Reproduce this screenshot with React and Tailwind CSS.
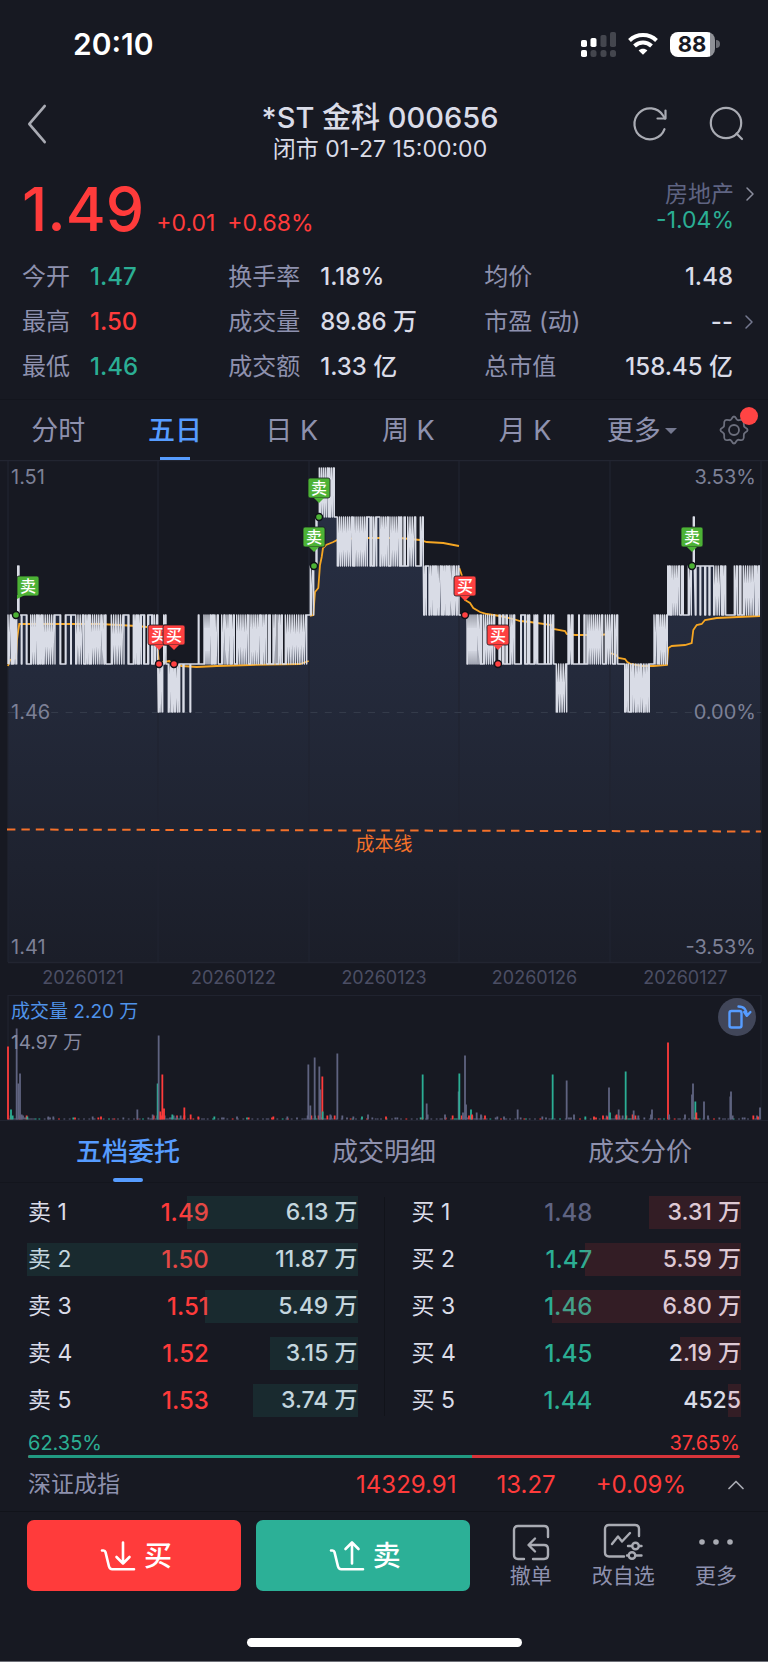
import React, { useState } from "react";
import { ChevronLeft, ChevronRight, ChevronUp } from "lucide-react";
import clsx from "clsx";

const STATS = [
  [["今开", "1.47", "text-[#2bae94]"], ["换手率", "1.18%"], ["均价", "1.48"]],
  [["最高", "1.50", "text-[#ff3b3b]"], ["成交量", "89.86 万"], ["市盈 (动)", "--", "", true]],
  [["最低", "1.46", "text-[#2bae94]"], ["成交额", "1.33 亿"], ["总市值", "158.45 亿"]],
];

const PERIODS = ["分时", "五日", "日 K", "周 K", "月 K", "更多"];
const BOOK_TABS = ["五档委托", "成交明细", "成交分价"];

const ASKS = [
  ["卖 1", "1.49", "6.13 万", 6.13, "text-[#ff3b3b]"],
  ["卖 2", "1.50", "11.87 万", 11.87, "text-[#ff3b3b]"],
  ["卖 3", "1.51", "5.49 万", 5.49, "text-[#ff3b3b]"],
  ["卖 4", "1.52", "3.15 万", 3.15, "text-[#ff3b3b]"],
  ["卖 5", "1.53", "3.74 万", 3.74, "text-[#ff3b3b]"],
];

const BIDS = [
  ["买 1", "1.48", "3.31 万", 3.31, "text-[#5f6482]"],
  ["买 2", "1.47", "5.59 万", 5.59, "text-[#2bae94]"],
  ["买 3", "1.46", "6.80 万", 6.8, "text-[#2bae94]"],
  ["买 4", "1.45", "2.19 万", 2.19, "text-[#2bae94]"],
  ["买 5", "1.44", "4525", 0.4525, "text-[#2bae94]"],
];

const MAX_QTY = 11.87;

// y of each price level on the chart
const LEVEL = { 151: 468, 150: 517, 149: 566, 148: 615, 147: 664, 146: 712 };

// Ticks of the five day line, three ticks to one chart unit.
// [high, low, [[from, to, rest level after the run], ...]]
const SEGMENTS = [
  [148, 147, [[24, 34, "l"], [38, 50, "h"]]],
  [149, 148, [[53, 57, "l"]]],
  [148, 147, [[64, 66, "h"], [79, 81, "l"], [92, 112, "l"], [115, 126, "l"], [129, 165, "h"], [180, 182, "l"], [196, 198, "h"], [212, 214, "h"], [227, 251, "l"], [256, 268, "l"], [271, 306, "h"], [312, 318, "l"], [334, 372, "h"], [384, 387, "l"], [400, 412, "l"], [416, 424, "h"], [431, 434, "l"], [443, 446, "h"], [455, 458, "l"], [463, 473, "l"]]],
  [147, 146, [[475, 488, "h"]]],
  [148, 147, [[491, 498, "l"]]],
  [147, 146, [[505, 513, "h"], [517, 519, "h"], [524, 526, "h"], [532, 539, "h"], [549, 552, "h"], [570, 572, "h"]]],
  [148, 147, [[595, 597, "l"], [612, 633, "l"], [637, 642, "l"], [645, 655, "l"], [665, 675, "h"], [681, 690, "l"], [694, 703, "l"], [710, 745, "l"], [750, 782, "h"], [786, 800, "l"], [806, 811, "l"], [819, 828, "l"], [834, 847, "l"], [856, 920, "h"]]],
  [149, 148, [[931, 941, "h"]]],
  [150, 149, [[948, 951, "h"]]],
  [151, 150, [[958, 985, "h"], [989, 1003, "l"]]],
  [150, 149, [[1012, 1058, "l"], [1062, 1102, "h"], [1110, 1116, "l"], [1121, 1130, "h"], [1140, 1165, "l"], [1170, 1198, "l"], [1202, 1205, "l"], [1212, 1216, "l"], [1223, 1247, "l"], [1261, 1270, "l"]]],
  [149, 148, [[1271, 1279, "h"], [1287, 1300, "h"], [1304, 1309, "h"], [1314, 1324, "h"], [1328, 1340, "h"], [1344, 1350, "h"], [1356, 1363, "h"], [1369, 1377, "l"]]],
  [148, 147, [[1401, 1434, "h"], [1440, 1444, "l"], [1450, 1484, "l"], [1497, 1501, "l"], [1507, 1512, "l"], [1518, 1522, "l"], [1530, 1544, "l"], [1562, 1564, "h"], [1574, 1577, "l"], [1583, 1589, "l"], [1602, 1613, "l"], [1633, 1636, "l"], [1643, 1646, "l"], [1652, 1661, "l"]]],
  [147, 146, [[1669, 1700, "h"]]],
  [148, 147, [[1704, 1708, "h"], [1714, 1719, "l"], [1736, 1738, "l"], [1752, 1755, "l"], [1761, 1808, "l"], [1816, 1838, "l"], [1844, 1853, "l"]]],
  [147, 146, [[1874, 1886, "l"], [1892, 1900, "h"], [1906, 1924, "h"], [1930, 1948, "h"]]],
  [148, 147, [[1962, 1972, "h"], [1976, 2002, "h"]]],
  [149, 148, [[2003, 2009, "l"], [2013, 2039, "l"], [2045, 2050, "l"], [2065, 2074, "h"]]],
  [150, 149, [[2080, 2083, "l"]]],
  [149, 148, [[2086, 2088, "h"], [2100, 2102, "h"], [2114, 2117, "h"], [2127, 2130, "h"], [2141, 2165, "l"], [2169, 2177, "l"], [2203, 2212, "l"], [2218, 2223, "l"], [2230, 2266, "l"], [2270, 2278, "h"]]],
];

const AVERAGE = [
  [[24, 666], [30, 660], [48, 658], [51, 640], [55, 630], [58, 624], [300, 624], [410, 626], [440, 627], [472, 629]],
  [[473, 650], [477, 663], [492, 662], [508, 661], [518, 664], [545, 666], [590, 667], [650, 666], [750, 665], [900, 664], [926, 661]],
  [[930, 616], [940, 615], [945, 592], [955, 588], [960, 565], [965, 557], [969, 548], [978, 545], [1000, 542], [1012, 540], [1070, 538], [1200, 538], [1260, 540], [1280, 542], [1330, 543], [1377, 546]],
  [[1378, 568], [1385, 575], [1395, 600], [1410, 603], [1420, 608], [1440, 612], [1460, 614], [1500, 616], [1540, 619], [1560, 621], [1590, 622], [1655, 625], [1660, 629], [1695, 631], [1700, 634], [1725, 635], [1800, 635], [1828, 634]],
  [[1830, 653], [1848, 655], [1855, 658], [1875, 659], [1882, 662], [1892, 664], [1925, 666], [1960, 666], [2001, 665], [2005, 648], [2015, 646], [2055, 645], [2075, 643], [2080, 630], [2090, 625], [2105, 624], [2115, 620], [2150, 618], [2280, 616]],
];

const MARKS = [
  { x: 16, y: 615, type: "sell", shift: 12 },
  { x: 159, y: 664, type: "buy" },
  { x: 174, y: 664, type: "buy" },
  { x: 319, y: 517, type: "sell" },
  { x: 314, y: 566, type: "sell" },
  { x: 465, y: 615, type: "buy" },
  { x: 498, y: 664, type: "buy" },
  { x: 692, y: 566, type: "sell" },
];

const DATES = ["20260121", "20260122", "20260123", "20260126", "20260127"];
const DAY_EDGES = [8, 158, 309, 459, 610, 761];

const VOLUMES = [
  [24, 73, "r"], [33, 10, "g"], [38, 4, "g"], [50, 91, "n"], [55, 36, "n"], [60, 46, "n"], [65, 5, "n"], [82, 3, "g"], [145, 3, "n"],
  [160, 3, "n"], [278, 3, "n"], [303, 3, "r"], [412, 10, "n"], [458, 5, "n"], [473, 36, "g"], [476, 84, "n"], [481, 8, "r"], [487, 45, "r"],
  [492, 11, "r"], [517, 5, "g"], [530, 3, "n"], [553, 12, "r"], [572, 5, "r"], [595, 3, "r"], [643, 3, "g"], [711, 3, "n"], [820, 3, "r"],
  [862, 3, "n"], [925, 55, "n"], [931, 14, "n"], [944, 62, "n"], [958, 53, "n"], [961, 30, "n"], [967, 43, "r"], [968, 8, "g"], [991, 5, "n"],
  [1012, 66, "n"], [1027, 4, "n"], [1060, 3, "n"], [1086, 3, "g"], [1104, 5, "n"], [1158, 3, "r"], [1268, 45, "g"], [1280, 16, "n"],
  [1283, 5, "n"], [1335, 5, "n"], [1376, 28, "n"], [1378, 46, "g"], [1389, 7, "n"], [1395, 64, "n"], [1398, 15, "n"], [1413, 10, "g"],
  [1416, 5, "r"], [1430, 7, "n"], [1443, 5, "n"], [1492, 3, "n"], [1512, 3, "n"], [1553, 10, "n"], [1627, 3, "n"], [1658, 45, "g"],
  [1700, 39, "n"], [1722, 5, "n"], [1756, 3, "g"], [1782, 3, "r"], [1822, 3, "r"], [1827, 32, "n"], [1830, 7, "g"], [1850, 5, "r"],
  [1856, 10, "n"], [1877, 48, "g"], [1898, 5, "r"], [1901, 9, "n"], [1915, 4, "n"], [1953, 5, "n"], [1956, 10, "n"], [2004, 77, "r"],
  [2007, 5, "n"], [2055, 5, "n"], [2076, 25, "n"], [2079, 36, "n"], [2086, 18, "g"], [2089, 7, "r"], [2112, 18, "n"], [2124, 4, "n"],
  [2191, 23, "n"], [2193, 28, "n"], [2198, 4, "n"], [2274, 3, "r"], [2280, 12, "n"],
];

const VOLUME_COLOR = { r: "#ff3b3b", g: "#2bae94", n: "#5f6380" };

// low turnover minutes between the peaks
const QUIET = Array.from({ length: 420 }, (_, i) => {
  const seed = (i * 7919 + 131) % 97;
  const t = 27 + Math.floor(i * 5.37);
  const nearOpen = DAY_EDGES.some((e) => t / 3 - e > -8 && t / 3 - e < 28);
  if (!nearOpen && seed > 42) return null;
  return [t, nearOpen && seed % 3 === 0 ? 4 : seed % 5 === 0 ? 2 : 1, seed % 6 === 0 ? "r" : seed % 7 === 0 ? "g" : "n"];
}).filter(Boolean);

function pricePoints() {
  const points = [];
  SEGMENTS.forEach(([high, low, runs]) => {
    const h = LEVEL[high];
    const l = LEVEL[low];
    runs.forEach(([from, to, rest]) => {
      points.push([from / 3, l], [from / 3, h]);
      // odd number of steps, so the zigzag that starts high ends low
      const half = Math.round((to - from) / 7);
      const steps = half * 2 + 1;
      for (let i = 1; i < steps; i++) {
        points.push([(from + ((to - from) * i) / steps) / 3, i % 2 ? l : h]);
      }
      points.push([to / 3, h], [to / 3, l], [to / 3, rest === "h" ? h : l]);
    });
  });
  // a flat stretch keeps the level of the run before it
  const out = [];
  points.forEach((p) => {
    const prev = out[out.length - 1];
    if (prev && p[0] - prev[0] > 2.2) out.push([p[0], prev[1]]);
    out.push(p);
  });
  out.push([760, out[out.length - 1][1]]);
  return out;
}

const toPath = (pts) => pts.map(([x, y], i) => `${i ? "L" : "M"}${x.toFixed(1)} ${y}`).join("");

const PRICE_PATH = toPath(pricePoints());

function Mark({ x, y, type, shift = 0 }) {
  const color = type === "sell" ? "#4cb235" : "#ff4141";
  const cx = x + shift;
  const tip = shift ? `M${cx - 11} ${y - 20}v4l8 -4z` : `M${cx - 5} ${y - 19}l5 5l5 -5z`;
  return (
    <g>
      <rect x={cx - 11} y={y - 39} width="22" height="20" rx="2" fill={color} stroke="#171922" strokeWidth="0.8" />
      <path d={tip} fill={color} />
      <text x={cx} y={y - 23} textAnchor="middle" fontSize="16" fontWeight="500" fill="#fff">
        {type === "sell" ? "卖" : "买"}
      </text>
      <circle cx={x} cy={y} r="3.5" fill={color} stroke="#0f1118" strokeWidth="1.4" />
    </g>
  );
}

function PriceChart() {
  return (
    <svg viewBox="0 460 768 535" className="block w-full h-auto">
      <defs>
        <linearGradient id="area" gradientUnits="userSpaceOnUse" x1="0" y1="520" x2="0" y2="962">
          <stop offset="0" stopColor="#272e42" />
          <stop offset="0.35" stopColor="#242a3b" />
          <stop offset="1" stopColor="#1b1e29" />
        </linearGradient>
      </defs>
      <path d={`${PRICE_PATH}L760 962L8 962Z`} fill="url(#area)" />
      <path d="M0 460.5H768M8 962.5H761" stroke="#222531" strokeWidth="1.4" />
      {DAY_EDGES.map((x) => (
        <path key={x} d={`M${x} 461V962`} stroke="#212431" strokeWidth="1.2" />
      ))}
      <path d="M8 712.5H761" stroke="#343b4a" strokeDasharray="7 7.4" />
      {AVERAGE.map((day, i) => (
        <path key={i} d={toPath(day.map(([t, y]) => [t / 3, y]))} fill="none" stroke="#f5a623" strokeWidth="1.8" />
      ))}
      <path d={PRICE_PATH} fill="none" stroke="#d9dce6" strokeWidth="1.4" strokeLinejoin="round" />
      <path d="M7 829.5L761 831.5" stroke="#f4712a" strokeWidth="2" strokeDasharray="8.4 6" />
      <text x="384" y="851" textAnchor="middle" fontSize="19" fill="#f4712a">成本线</text>
      {MARKS.map((m, i) => (
        <Mark key={i} {...m} />
      ))}
      <g fontSize="20" fill="#7c8096">
        <text x="11" y="484">1.51</text>
        <text x="11" y="719">1.46</text>
        <text x="11" y="954">1.41</text>
        <g textAnchor="end">
          <text x="756" y="484">3.53%</text>
          <text x="756" y="719">0.00%</text>
          <text x="756" y="954">-3.53%</text>
        </g>
      </g>
      <g fontSize="18" fill="#4b4e64" textAnchor="middle">
        {DATES.map((d, i) => (
          <text key={d} x={(DAY_EDGES[i] + DAY_EDGES[i + 1]) / 2} y="984">{d}</text>
        ))}
      </g>
    </svg>
  );
}

function VolumeChart() {
  return (
    <div className="relative">
      <svg viewBox="0 995 768 126" className="block w-full h-auto">
        <path d="M8 1120V995.5H761V1120" fill="none" stroke="#20232f" strokeWidth="1.2" />
        <path d="M0 1120.5H768" stroke="#20232f" />
        {[...QUIET, ...VOLUMES].map(([t, h, c], i) => (
          <rect key={i} x={t / 3 - 0.9} y={1119.5 - h} width="1.8" height={h} fill={VOLUME_COLOR[c]} />
        ))}
        <text x="11" y="1018" fontSize="19" fill="#4f93ea">成交量 2.20 万</text>
        <text x="11" y="1049" fontSize="19" fill="#868aa0">14.97 万</text>
      </svg>
      <button aria-label="横屏" className="absolute right-3 top-[3px] w-[38px] h-[38px] rounded-full bg-[#414659] flex items-center justify-center">
        <svg viewBox="0 0 38 38" className="w-full h-full" fill="none" stroke="#569cff" strokeWidth="2.4" strokeLinecap="round" strokeLinejoin="round">
          <rect x="11.5" y="13" width="12" height="16.5" rx="2" />
          <path d="M20.5 8.5C26 8.5 29 12 28.8 17.5M26.2 14l2.6 3.8l3.6-3.8" />
        </svg>
      </button>
    </div>
  );
}

function OrderTable({ rows, barClass, label }) {
  return (
    <table aria-label={label} className="flex-1 table-fixed border-collapse text-[23px] font-medium text-[#dadce8]">
      <tbody>
        {rows.map(([name, price, qty, size, color]) => (
          <tr key={name} className="relative h-[47px]">
            <td className="w-[22%] pl-px font-normal">{name}</td>
            <td className={clsx("w-[33%] text-right text-2xl", color)}>{price}</td>
            <td className="text-right">
              {qty}
              <span
                className={clsx("absolute right-0 inset-y-[7px]", barClass)}
                style={{ width: `${(size / MAX_QTY) * 100}%` }}
              />
            </td>
          </tr>
        ))}
      </tbody>
    </table>
  );
}

function TradeIcon({ up }) {
  return (
    <svg viewBox="0 0 36 32" className="w-9 h-8" fill="none" stroke="#fff" strokeWidth="2.6" strokeLinecap="round" strokeLinejoin="round">
      <path d="M2 10.5h1.5q1.6 0 2 1.6L9 26.5q.7 2.7 3.2 2.7H34" />
      {up ? <path d="M23 23.5V2.5M16.5 9L23 2.5L29.5 9" /> : <path d="M23 2.5V23.5M16.5 17L23 23.5L29.5 17" />}
    </svg>
  );
}

function ToolButton({ label, children }) {
  return (
    <button className="flex flex-col items-center text-[21px] leading-7 text-[#8e91ae]">
      <svg viewBox="0 0 40 40" className="w-10 h-10" fill="none" stroke="#a9abb3" strokeWidth="2.4" strokeLinecap="round" strokeLinejoin="round">
        {children}
      </svg>
      {label}
    </button>
  );
}

function StatusBar() {
  return (
    <div className="h-[88px] flex items-center justify-between pl-[73px] pr-12 text-white">
      <span className="text-[30px] font-semibold">20:10</span>
      <div className="flex items-center gap-3">
        <svg viewBox="0 0 35 25" className="w-[35px] h-[25px]" fill="#fff">
          <rect x="0" y="8" width="6" height="7" rx="1.8" />
          <rect x="9.5" y="6" width="6" height="9" rx="1.8" />
          <rect x="19.5" y="3" width="6" height="12" rx="1.8" fill="#44464e" />
          <rect x="29" y="0" width="6" height="15" rx="1.8" fill="#44464e" />
          <rect x="0" y="18" width="6" height="7" rx="1.8" />
          <rect x="9.5" y="18" width="6" height="7" rx="2.5" fill="#44464e" />
          <rect x="19.5" y="18" width="6" height="7" rx="2.5" fill="#44464e" />
          <rect x="29" y="18" width="6" height="7" rx="2.5" fill="#44464e" />
        </svg>
        <svg viewBox="0 0 30 22" className="w-[30px] h-[22px]" fill="none" stroke="#fff" strokeWidth="4">
          <path d="M1.5 7.5C9 .3 21 .3 28.5 7.5" />
          <path d="M6.5 13C11.5 8.3 18.5 8.3 23.5 13" />
          <path d="M15 21.8L10.6 17.4C13 15.2 17 15.2 19.4 17.4Z" fill="#fff" stroke="none" />
        </svg>
        <div className="flex items-center gap-px">
          <span className="w-[45px] h-[25px] rounded-lg bg-linear-to-r from-white from-88% to-[#8f9197] to-88% text-[#171922] text-[22px] leading-[25px] font-bold text-center pr-px">
            88
          </span>
          <span className="w-1 h-2 rounded-r-full bg-[#6b6d74]" />
        </div>
      </div>
    </div>
  );
}

export default function App() {
  const [period, setPeriod] = useState("五日");
  const [bookTab, setBookTab] = useState("五档委托");

  return (
    <div className="w-full bg-[#171922] border-b border-[#6c6e76] font-['Inter','Noto_Sans_CJK_SC',sans-serif] text-[#dadce8]">
      <StatusBar />

      {/* Header */}
      <header className="relative h-[84px] pl-[19px] pr-[22px] pt-3 flex justify-between items-start">
        <button aria-label="返回" className="h-12 flex items-center">
          <ChevronLeft className="w-9 h-12" stroke="#a9abb3" strokeWidth={1} preserveAspectRatio="none" viewBox="5 4 14 16" />
        </button>
        <div className="absolute inset-x-0 top-[14px] pr-2 text-center pointer-events-none">
          <h1 className="text-[29px] leading-8 font-medium">*ST 金科 000656</h1>
          <p className="text-[23px] leading-[30px]">闭市 01-27 15:00:00</p>
        </div>
        <div className="flex gap-9 h-12 items-center">
          <button aria-label="刷新">
            <svg viewBox="0 0 40 40" className="w-10 h-10" fill="none" stroke="#a9abb3" strokeWidth="2.2" strokeLinecap="round" strokeLinejoin="round">
              <path d="M34.5 25.2A15.5 15.5 0 1 1 33 11.5L35 14.5" />
              <path d="M35.5 6.5V14.5H27.5" />
            </svg>
          </button>
          <button aria-label="搜索">
            <svg viewBox="0 0 40 40" className="w-10 h-10" fill="none" stroke="#a9abb3" strokeWidth="2.2" strokeLinecap="round">
              <circle cx="20" cy="19" r="15.2" />
              <path d="M30.5 29.5L36 35" />
            </svg>
          </button>
        </div>
      </header>

      {/* Last price */}
      <section className="h-[82px] pl-[22px] pr-1.5 flex justify-between">
        <div className="flex items-baseline text-[#ff3b3b]">
          <span className="text-[61px] leading-[74px] font-medium">1.49</span>
          <span className="ml-3 text-[23px]">+0.01</span>
          <span className="ml-3 text-[23px]">+0.68%</span>
        </div>
        <div className="flex pt-2">
          <div className="text-right text-[23px] leading-7">
            <p className="text-[#5f6482]">房地产</p>
            <p className="leading-6 text-[#2bae94]">-1.04%</p>
          </div>
          <ChevronRight className="ml-1 w-6 h-7" stroke="#8b8e9e" strokeWidth={1.5} />
        </div>
      </section>

      {/* Quote figures */}
      <section className="pl-[22px] pr-[7px] pb-2.5">
        {STATS.map(([a, b, c]) => (
          <div key={a[0]} className="h-[45px] grid grid-cols-[29fr_36fr_35fr_28px] items-center text-2xl">
            <div className="flex gap-5">
              <span className="text-[#8e91ae]">{a[0]}</span>
              <span className={clsx("font-medium", a[2])}>{a[1]}</span>
            </div>
            <div className="flex gap-5">
              <span className="text-[#8e91ae]">{b[0]}</span>
              <span className="font-medium">{b[1]}</span>
            </div>
            <div className="flex justify-between">
              <span className="text-[#8e91ae]">{c[0]}</span>
              <span className="font-medium">{c[1]}</span>
            </div>
            {c[3] && <ChevronRight className="ml-1 w-6 h-7" stroke="#74788f" strokeWidth={1.5} />}
          </div>
        ))}
      </section>

      {/* Chart periods */}
      <nav className="h-[61px] border-t border-[#13151d] flex">
        <div className="flex-1 flex">
          {PERIODS.map((p) => (
            <button
              key={p}
              onClick={() => setPeriod(p)}
              className={clsx(
                "relative flex-1 flex items-center justify-center pt-0.5 text-[27px]",
                period === p ? "text-[#569cff] font-medium" : "text-[#8e91ae]"
              )}
            >
              {p}
              {p === "更多" && <span className="ml-1 border-x-[6px] border-x-transparent border-t-[6px] border-t-[#74788f]" />}
              {period === p && <span className="absolute bottom-0 left-1/2 -translate-x-1/2 w-[30px] h-[3px] bg-[#569cff]" />}
            </button>
          ))}
        </div>
        <button aria-label="设置" className="relative w-[68px] flex items-center justify-center">
          <svg viewBox="0 0 30 30" className="w-[30px] h-[30px]" fill="none" stroke="#6c6f7d" strokeWidth="1.8" strokeLinejoin="round">
            <path d="M12.5 4Q15 -1 17.5 4Q18.5 5.5 20 5.2Q25.5 3.5 24.8 9.5Q24.6 11.5 26.2 12.5Q31 15 26.2 17.5Q24.6 18.5 24.8 20.5Q25.5 26.5 20 24.8Q18.5 24.5 17.5 26Q15 31 12.5 26Q11.5 24.5 10 24.8Q4.5 26.5 5.2 20.5Q5.4 18.5 3.8 17.5Q-1 15 3.8 12.5Q5.4 11.5 5.2 9.5Q4.5 3.5 10 5.2Q11.5 5.5 12.5 4Z" />
            <circle cx="15" cy="15" r="5" />
          </svg>
          <span className="absolute right-2.5 top-[7px] w-[18px] h-[18px] rounded-full bg-[#ff4444]" />
        </button>
      </nav>

      <PriceChart />
      <VolumeChart />

      {/* Order book */}
      <nav className="h-[62px] border-b border-[#13151d] flex">
        {BOOK_TABS.map((t) => (
          <button
            key={t}
            onClick={() => setBookTab(t)}
            className={clsx(
              "relative flex-1 text-[26px]",
              bookTab === t ? "text-[#569cff] font-medium" : "text-[#8e91ae]"
            )}
          >
            {t}
            {bookTab === t && <span className="absolute bottom-0 left-1/2 -translate-x-1/2 w-[30px] h-1 rounded-full bg-[#569cff]" />}
          </button>
        ))}
      </nav>
      <section className="px-[27px] pt-[6px] flex">
        <OrderTable rows={ASKS} barClass="bg-[#2bae94]/12" label="卖盘" />
        <div className="mx-[26px] my-2 w-px bg-[#11131a]" />
        <OrderTable rows={BIDS} barClass="bg-[#ff3b3b]/12" label="买盘" />
      </section>
      <section className="px-7">
        <div className="h-[31px] flex items-center justify-between pt-1.5 text-[20px]">
          <span className="text-[#2bae94]">62.35%</span>
          <span className="text-[#ff3b3b]">37.65%</span>
        </div>
        <div className="h-[3px] rounded-full overflow-hidden bg-[#d8343a]">
          <div className="h-full bg-[#219a82]" style={{ width: "62.35%" }} />
        </div>
      </section>

      {/* Index */}
      <div className="h-[53px] pl-7 pr-[18px] flex items-center text-2xl text-[#ff3b3b]">
        <span className="flex-1 text-[23px] text-[#8e91ae]">深证成指</span>
        <span>14329.91</span>
        <span className="ml-10">13.27</span>
        <span className="ml-10">+0.09%</span>
        <button aria-label="展开" className="ml-9">
          <ChevronUp className="w-7 h-7" stroke="#a9abb3" strokeWidth={1.5} />
        </button>
      </div>

      {/* Actions */}
      <footer className="border-t border-[#11131a] pt-2 px-[27px]">
        <div className="flex">
          <div className="w-[62%] flex gap-[15px] text-[28px] font-medium text-white">
            <button className="flex-1 h-[71px] pl-1 rounded-[7px] bg-[#ff3b3b] flex items-center justify-center gap-2">
              <TradeIcon />
              买
            </button>
            <button className="flex-1 h-[71px] pl-1 rounded-[7px] bg-[#2cb097] flex items-center justify-center gap-2">
              <TradeIcon up />
              卖
            </button>
          </div>
          <div className="flex-1 flex justify-between pl-10 pr-1 pt-0.5">
            <ToolButton label="撤单">
              <path d="M13 37H7Q3 37 3 33V8Q3 4 7 4H33Q37 4 37 8V15" />
              <path d="M18 23H33Q37 23 37 27V33Q37 37 33 37H22M24 16.5L17.5 23L24 29.5" />
            </ToolButton>
            <ToolButton label="改自选">
              <path d="M21 34.5H6Q2 34.5 2 30.5V7Q2 3 6 3H32Q36 3 36 7V14" />
              <path d="M9 22L15 14.5L19 19.5L27 11" />
              <circle cx="32.5" cy="24" r="3.3" />
              <circle cx="29" cy="33.5" r="3.3" />
              <path d="M25 24H29M36 24H38.5M24 33.5H25.5M32.5 33.5H38.5" />
            </ToolButton>
            <ToolButton label="更多">
              <g fill="#a9abb3" stroke="none">
                <circle cx="6" cy="20" r="2.8" />
                <circle cx="20" cy="20" r="2.8" />
                <circle cx="34" cy="20" r="2.8" />
              </g>
            </ToolButton>
          </div>
        </div>
        <div className="mt-[47px] mb-[14px] mx-auto w-[39%] max-w-[275px] h-[9px] rounded-full bg-white" />
      </footer>
    </div>
  );
}
